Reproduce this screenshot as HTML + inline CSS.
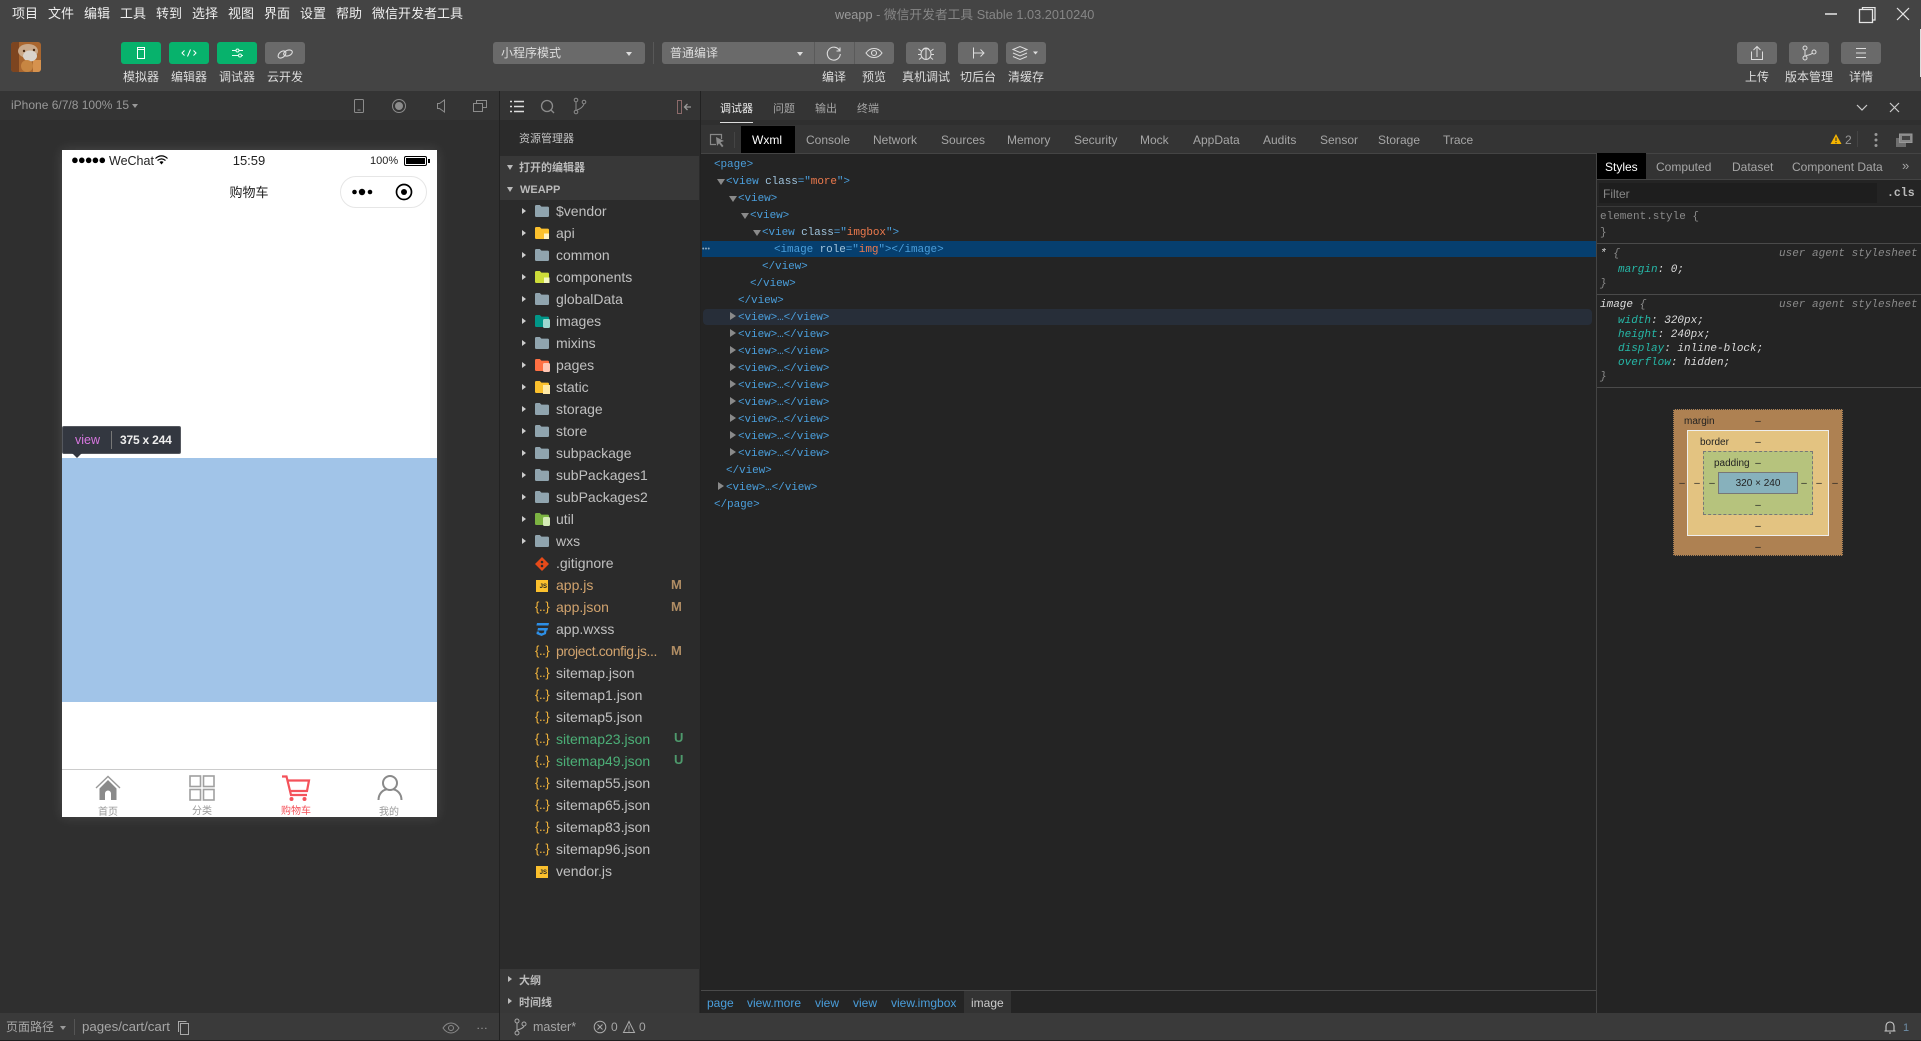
<!DOCTYPE html>
<html lang="zh">
<head>
<meta charset="utf-8">
<title>weapp</title>
<style>
*{box-sizing:border-box;margin:0;padding:0}
html,body{width:1921px;height:1041px;overflow:hidden;background:#2f2f2f}
body{position:relative;font-family:"Liberation Sans","Noto Sans CJK SC",sans-serif;font-size:12px;color:#ccc}
.b{position:absolute}
.t{position:absolute;white-space:nowrap;line-height:20px;height:20px}
.c{transform:translateX(-50%)}
.m{font-family:"Liberation Mono","Noto Sans CJK SC",monospace;font-size:11px}
.menu{font-size:13px;color:#eee;top:4px}
.lab{font-size:12px;color:#ddd;top:67px}
.btn{position:absolute;top:42px;height:22px;width:40px;border-radius:3px;background:#6a6a6a}
.g{background:#07b26c}
.btn svg{position:absolute;left:0;top:0}
.tab{font-size:12px;color:#a6a6a6;top:130px}
.rt{font-size:11px;color:#a6a6a6;top:99px}
.f{font-size:14px;color:#c0c0c0;left:556px;line-height:21px}
.ar{position:absolute;left:522px;width:0;height:0;margin-top:1px;border-left:4px solid #ccc;border-top:3px solid transparent;border-bottom:3px solid transparent}
.ic{position:absolute;left:535px}
.js{position:absolute;left:536px;width:12px;height:12px;background:#fbc02d;color:#222;font-size:6px;line-height:15px;text-align:right;font-weight:bold;padding-right:1px}
.jn{position:absolute;left:535px;font-size:13px;letter-spacing:-.4px;color:#f5b63c;line-height:20px;height:20px;white-space:nowrap}
.x{font-family:"Liberation Mono",monospace;font-size:11px;color:#4a9edb;line-height:19px;height:17px;position:absolute;white-space:nowrap;letter-spacing:-.08px}
.x i{font-style:normal;color:#9fc3dc}
.x u{text-decoration:none;color:#ee7a4d}
.tri{position:absolute;width:0;height:0;border-left:4px solid transparent;border-right:4px solid transparent;border-top:6px solid #8a8a8a}
.trr{position:absolute;width:0;height:0;border-left:6px solid #8a8a8a;border-top:4px solid transparent;border-bottom:4px solid transparent}
.s{font-family:"Liberation Mono",monospace;font-size:11px;line-height:17px;height:15px;position:absolute;white-space:nowrap;color:#8a8a8a}
.s b{font-weight:normal;font-style:italic;color:#26b7a7}
.s em{color:#ddd}
.d{font-size:10px;color:#222;line-height:14px;position:absolute;white-space:nowrap}
.crumb{font-size:12px;color:#4a9edb;top:993px}
</style>
</head>
<body>
<svg width="0" height="0" style="position:absolute"><defs>
<symbol id="fd" viewBox="0 0 14 12"><path d="M0 1.200C0 .5.5 0 1.200 0h3.600l1.600 1.600h6.400c.7 0 1.200.5 1.200 1.200v8c0 .7-.5 1.200-1.200 1.200H1.200C.5 12 0 11.500 0 10.800z" fill="#90a4ae"/></symbol>
</defs></svg>

<!-- top bar -->
<div class="b" style="left:0;top:0;width:1921px;height:91px;background:#444"></div>
<span class="t menu" style="left:12px">项目</span>
<span class="t menu" style="left:48px">文件</span>
<span class="t menu" style="left:84px">编辑</span>
<span class="t menu" style="left:120px">工具</span>
<span class="t menu" style="left:156px">转到</span>
<span class="t menu" style="left:192px">选择</span>
<span class="t menu" style="left:228px">视图</span>
<span class="t menu" style="left:264px">界面</span>
<span class="t menu" style="left:300px">设置</span>
<span class="t menu" style="left:336px">帮助</span>
<span class="t menu" style="left:372px">微信开发者工具</span>
<span class="t" style="left:835px;top:5px;font-size:12.750px;color:#868686"><span style="color:#9a9a9a">weapp</span> - 微信开发者工具 Stable 1.03.2010240</span>

<svg class="b" style="left:1825px;top:7px" width="90" height="17" fill="none" stroke="#e6e6e6">
<path d="M0 7h12" stroke-width="1.500"/>
<path d="M34.500 2.500h13v13h-13zM37.500 2.500V.5h12.500V13h-2.500" stroke-width="1.300"/>
<path d="M72 1l12 12M84 1L72 13" stroke-width="1.200"/>
</svg>
<div class="b" style="left:1920px;top:29px;width:1px;height:48px;background:#ddd"></div>

<!-- avatar -->
<svg class="b" style="left:11px;top:42px;border-radius:3px" width="30" height="30">
<rect width="30" height="30" fill="#a9662f"/>
<rect x="0" y="0" width="8" height="30" fill="#7d4520"/>
<rect x="22" y="18" width="8" height="12" fill="#d6924e"/>
<ellipse cx="17" cy="9" rx="10" ry="7" fill="#c9a98a"/>
<ellipse cx="19" cy="14" rx="7" ry="5.500" fill="#d9d3cc"/>
<ellipse cx="16" cy="24" rx="6" ry="6" fill="#c78642"/>
<circle cx="13" cy="9" r="1.200" fill="#4a2c17"/><circle cx="23" cy="8" r="1.200" fill="#4a2c17"/>
</svg>

<div class="btn g" style="left:121px"><svg width="40" height="22" fill="none" stroke="#fff"><rect x="16.500" y="5.500" width="7" height="11"/><path d="M17 7.500h6"/></svg></div>
<div class="btn g" style="left:169px"><svg width="40" height="22" fill="none" stroke="#fff"><path d="M15.500 8.500L13 11l2.500 2.500M24.500 8.500L27 11l-2.500 2.500M21.500 7.500l-3 7"/></svg></div>
<div class="btn g" style="left:217px"><svg width="40" height="22" fill="none" stroke="#e6fff3"><path d="M15 8.500h4M22 8.500h4M15 13.500h6M25 13.500h1"/><circle cx="20.500" cy="8.500" r="1.500"/><circle cx="23" cy="13.500" r="1.500"/></svg></div>
<div class="btn" style="left:265px"><svg width="40" height="22" fill="none" stroke="#ddd" stroke-width="1.100"><ellipse cx="17" cy="12.500" rx="4.500" ry="2.800" transform="rotate(-40 17 12.500)"/><ellipse cx="23" cy="11" rx="4.500" ry="2.800" transform="rotate(-20 23 11)"/></svg></div>
<span class="t lab c" style="left:141px">模拟器</span>
<span class="t lab c" style="left:189px">编辑器</span>
<span class="t lab c" style="left:237px">调试器</span>
<span class="t lab c" style="left:285px">云开发</span>

<div class="btn" style="left:493px;width:152px"><span class="t" style="left:8px;top:1px;color:#ddd;font-size:12px">小程序模式</span><div class="b" style="left:133px;top:10px;border-left:3px solid transparent;border-right:3px solid transparent;border-top:4px solid #ddd"></div></div>
<div class="b" style="left:653px;top:42px;width:1px;height:22px;background:#585858"></div>
<div class="btn" style="left:662px;width:232px"><span class="t" style="left:8px;top:1px;color:#ddd;font-size:12px">普通编译</span><div class="b" style="left:135px;top:10px;border-left:3px solid transparent;border-right:3px solid transparent;border-top:4px solid #ddd"></div>
<div class="b" style="left:152px;top:0;width:1px;height:22px;background:#5a5a5a"></div><div class="b" style="left:192px;top:0;width:1px;height:22px;background:#5a5a5a"></div>
<svg width="232" height="22" fill="none" stroke="#ddd" stroke-width="1.100"><path d="M177.500 8.500a6.500 6.500 0 1 0 .8 3.500M178 5.500v3.500h-3.500"/><path d="M204 11c2-3 4.500-4.500 8-4.500s6 1.500 8 4.500c-2 3-4.500 4.500-8 4.500s-6-1.500-8-4.500z"/><circle cx="212" cy="11" r="2.500"/></svg></div>
<span class="t lab c" style="left:834px">编译</span>
<span class="t lab c" style="left:874px">预览</span>
<div class="btn" style="left:906px"><svg width="40" height="22" fill="none" stroke="#ddd"><ellipse cx="20" cy="12" rx="5" ry="5.500"/><path d="M17 7.500c1-2 5-2 6 0M20 6.500v11M15 9l-2.500-2M25 9l2.500-2M14.500 12.500H12M25.500 12.500H28M15.500 15.500l-2.500 2M24.500 15.500l2.500 2"/></svg></div>
<span class="t lab c" style="left:926px">真机调试</span>
<div class="btn" style="left:958px"><svg width="40" height="22" fill="none" stroke="#ddd"><path d="M15.500 5.500v11M15.500 11h10M22.500 7.500l3.500 3.500-3.500 3.500"/></svg></div>
<span class="t lab c" style="left:978px">切后台</span>
<div class="btn" style="left:1006px"><svg width="40" height="22" fill="none" stroke="#ddd"><path d="M7 7.500l7-3 7 3-7 3zM7 11l7 3 7-3M7 14.500l7 3 7-3"/><path d="M27 9.500h5l-2.500 3z" fill="#ddd" stroke="none"/></svg></div>
<span class="t lab c" style="left:1026px">清缓存</span>

<div class="btn" style="left:1737px"><svg width="40" height="22" fill="none" stroke="#ddd"><path d="M14.500 9.500v8h11v-8M20 15V4.500M16.500 8l3.500-3.500L23.500 8"/></svg></div>
<div class="btn" style="left:1789px"><svg width="40" height="22" fill="none" stroke="#ddd"><circle cx="16" cy="6" r="2"/><circle cx="16" cy="16" r="2"/><circle cx="25" cy="10" r="2"/><path d="M16 8v6M17 13.500c3-.5 5.500-1 6.500-2.500"/></svg></div>
<div class="btn" style="left:1841px"><svg width="40" height="22" fill="none" stroke="#ddd"><path d="M15 6.500h10M15 11h10M15 15.500h10"/></svg></div>
<span class="t lab c" style="left:1757px">上传</span>
<span class="t lab c" style="left:1809px">版本管理</span>
<span class="t lab c" style="left:1861px">详情</span>

<!-- second rows -->
<div class="b" style="left:0;top:91px;width:1921px;height:29px;background:#343434"></div>
<div class="b" style="left:0;top:120px;width:500px;height:893px;background:#2f2f2f"></div>
<span class="t" style="left:11px;top:95px;color:#999;font-size:12px">iPhone 6/7/8 100% 15</span>
<div class="b" style="left:132px;top:104px;border-left:3px solid transparent;border-right:3px solid transparent;border-top:4px solid #999"></div>
<svg class="b" style="left:350px;top:96px" width="150" height="20" fill="none" stroke="#8c8c8c">
<rect x="4.500" y="3.500" width="9" height="13" rx="1"/><path d="M7.500 14h3"/>
<circle cx="49" cy="10" r="6.500"/><circle cx="49" cy="10" r="3.500" fill="#8c8c8c"/>
<path d="M89.500 7.500h-2v5h2l5 3.500V4z"/>
<rect x="123.500" y="7.500" width="9" height="8"/><path d="M126.500 7.500v-3h10v7h-4"/>
</svg>

<!-- phone -->
<div class="b" style="left:62px;top:150px;width:375px;height:667px;background:#fff;box-shadow:0 0 12px rgba(255,255,255,.13);overflow:hidden"></div>
<span class="t" style="left:71px;top:150px;color:#000;font-size:13px;letter-spacing:-1px">●●●●●</span>
<span class="t" style="left:109px;top:151px;color:#222;font-size:12.500px">WeChat</span>
<svg class="b" style="left:155px;top:155px" width="13" height="10" fill="none" stroke="#000" stroke-width="1.200"><path d="M.5 3.500c3.500-3.500 8.500-3.500 12 0M2.500 5.500c2.500-2 5.500-2 8 0"/><path d="M4.500 7L6.500 9.500 8.500 7c-1-1-3-1-4 0z" fill="#000" stroke="none"/></svg>
<span class="t c" style="left:249px;top:151px;color:#222;font-size:13px">15:59</span>
<span class="t" style="left:370px;top:151px;color:#222;font-size:11px">100%</span>
<div class="b" style="left:404px;top:156px;width:23px;height:10px;border:1px solid #000;border-radius:2px;padding:1px"><div style="width:100%;height:100%;background:#000"></div></div>
<div class="b" style="left:428px;top:159px;width:1.500px;height:4px;background:#000"></div>
<span class="t c" style="left:249px;top:183px;color:#222;font-size:13px">购物车</span>
<div class="b" style="left:340px;top:176px;width:87px;height:32px;border:1px solid #e6e6e6;border-radius:16px;background:#fff"></div>
<svg class="b" style="left:350px;top:182px" width="70" height="20"><circle cx="4.500" cy="10" r="2.300"/><circle cx="12" cy="10" r="3.200"/><circle cx="20" cy="10" r="2.300"/><circle cx="54" cy="10" r="7.500" fill="none" stroke="#000" stroke-width="1.700"/><circle cx="54" cy="10" r="3"/></svg>
<div class="b" style="left:62px;top:458px;width:375px;height:244px;background:#a1c4e8"></div>
<div class="b" style="left:62px;top:426px;width:119px;height:28px;background:#333740;border:1px solid #55585f;border-radius:2px"></div>
<div class="b" style="left:72px;top:453px;border-left:5px solid transparent;border-right:5px solid transparent;border-top:5px solid #333740"></div>
<span class="t" style="left:75px;top:430px;color:#d877e0;font-size:12.500px">view</span>
<div class="b" style="left:111px;top:431px;width:1px;height:18px;background:#777"></div>
<span class="t" style="left:120px;top:430px;color:#eee;font-size:12px;font-weight:bold;letter-spacing:-.2px">375 x 244</span>
<div class="b" style="left:62px;top:769px;width:375px;height:1px;background:#ccc"></div>
<svg class="b" style="left:95px;top:774px" width="26" height="27"><path d="M1 14L13 2.500 25 14" fill="none" stroke="#999" stroke-width="1.400"/><path d="M4.500 14.500L13 6l8.500 8.500V26H16v-6.500a3 3 0 0 0-6 0V26H4.500z" fill="#8a8a8a"/></svg>
<svg class="b" style="left:189px;top:775px" width="27" height="27" fill="none" stroke="#a0a0a0" stroke-width="1.600"><rect x="1" y="1" width="10.500" height="10.500"/><rect x="14.500" y="1" width="10.500" height="10.500"/><rect x="1" y="14.500" width="10.500" height="10.500"/><rect x="14.500" y="14.500" width="10.500" height="10.500"/></svg>
<svg class="b" style="left:281px;top:775px" width="30" height="27" fill="none" stroke="#f4525a" stroke-width="2.200"><path d="M1 1.500h4.500L10 20h16"/><path d="M7 5.500h21l-2 10.500H9.500"/><circle cx="10.500" cy="24" r="2" fill="#f4525a" stroke="none"/><circle cx="23.500" cy="24" r="2" fill="#f4525a" stroke="none"/></svg>
<svg class="b" style="left:377px;top:774px" width="26" height="28" fill="none" stroke="#8a8a8a" stroke-width="2"><circle cx="13" cy="9" r="7"/><path d="M1.500 26c0-6 4-10 8-10.500M24.500 26c0-6-4-10-8-10.500"/></svg>
<span class="t c" style="left:108px;top:803px;color:#999;font-size:10px">首页</span>
<span class="t c" style="left:202px;top:802px;color:#999;font-size:10px">分类</span>
<span class="t c" style="left:296px;top:802px;color:#f4525a;font-size:10px">购物车</span>
<span class="t c" style="left:389px;top:803px;color:#999;font-size:10px">我的</span>

<!-- middle panel -->
<div class="b" style="left:499px;top:91px;width:1px;height:949px;background:#222"></div>
<div class="b" style="left:500px;top:120px;width:200px;height:893px;background:#2b2b2b"></div>
<svg class="b" style="left:500px;top:96px" width="200" height="22" fill="none">
<path d="M10 5.500h2M14 5.500h10M10 10.500h2M14 10.500h10M10 15.500h2M14 15.500h10" stroke="#ddd" stroke-width="1.500"/>
<circle cx="47" cy="10" r="5.500" stroke="#8c8c8c" stroke-width="1.300"/><path d="M51 14l3 3" stroke="#8c8c8c" stroke-width="1.300"/>
<circle cx="76" cy="16" r="1.800" stroke="#8c8c8c"/><circle cx="76" cy="4" r="1.800" stroke="#8c8c8c"/><circle cx="84" cy="6" r="1.800" stroke="#8c8c8c"/><path d="M76 6v8M77 14c3-1 6-3 7-6" stroke="#8c8c8c"/>
<rect x="177.500" y="4.500" width="4" height="13" stroke="#8c6a6a"/><path d="M191 11h-6M187.500 8l-3 3 3 3" stroke="#999" stroke-width="1.300"/>
</svg>
<span class="t" style="left:519px;top:129px;color:#c4c4c4;font-size:11px">资源管理器</span>
<div class="b" style="left:500px;top:156px;width:199px;height:44px;background:#383838"></div>
<div class="b" style="left:507px;top:165px;border-left:3.500px solid transparent;border-right:3.500px solid transparent;border-top:5px solid #bbb"></div>
<span class="t" style="left:519px;top:158px;color:#bbb;font-size:11px;font-weight:bold">打开的编辑器</span>
<div class="b" style="left:507px;top:187px;border-left:3.500px solid transparent;border-right:3.500px solid transparent;border-top:5px solid #bbb"></div>
<span class="t" style="left:520px;top:180px;color:#bbb;font-size:11px;font-weight:bold">WEAPP</span>

<!-- tree -->
<div class="ar" style="top:207px"></div><svg class="ic" style="top:205px" width="14" height="12"><use href="#fd"/></svg><span class="t f" style="top:201px">$vendor</span>
<div class="ar" style="top:229px"></div><svg class="ic" style="top:227px" width="15" height="13"><path d="M0 1.200C0 .5.5 0 1.200 0h3.600l1.600 1.600h6.400c.7 0 1.200.5 1.200 1.200v8c0 .7-.5 1.200-1.200 1.200H1.200C.5 12 0 11.500 0 10.800z" fill="#fbc02d"/><path d="M9 6.500h5v5.500H9z" fill="#fff2c4"/></svg><span class="t f" style="top:223px">api</span>
<div class="ar" style="top:251px"></div><svg class="ic" style="top:249px" width="14" height="12"><use href="#fd"/></svg><span class="t f" style="top:245px">common</span>
<div class="ar" style="top:273px"></div><svg class="ic" style="top:271px" width="15" height="13"><path d="M0 1.200C0 .5.5 0 1.200 0h3.600l1.600 1.600h6.400c.7 0 1.200.5 1.200 1.200v8c0 .7-.5 1.200-1.200 1.200H1.200C.5 12 0 11.500 0 10.800z" fill="#cddc39"/><path d="M9 6.500h5.500V12H9z" fill="#f4f8c0"/></svg><span class="t f" style="top:267px">components</span>
<div class="ar" style="top:295px"></div><svg class="ic" style="top:293px" width="14" height="12"><use href="#fd"/></svg><span class="t f" style="top:289px">globalData</span>
<div class="ar" style="top:317px"></div><svg class="ic" style="top:315px" width="15" height="13"><path d="M0 1.200C0 .5.5 0 1.200 0h3.600l1.600 1.600h6.400c.7 0 1.200.5 1.200 1.200v8c0 .7-.5 1.200-1.200 1.200H1.200C.5 12 0 11.500 0 10.800z" fill="#009688"/><rect x="8" y="4" width="7" height="9" rx="1.500" fill="#9fd8cf"/></svg><span class="t f" style="top:311px">images</span>
<div class="ar" style="top:339px"></div><svg class="ic" style="top:337px" width="14" height="12"><use href="#fd"/></svg><span class="t f" style="top:333px">mixins</span>
<div class="ar" style="top:361px"></div><svg class="ic" style="top:359px" width="15" height="13"><path d="M0 1.200C0 .5.5 0 1.200 0h3.600l1.600 1.600h6.400c.7 0 1.200.5 1.200 1.200v8c0 .7-.5 1.200-1.200 1.200H1.200C.5 12 0 11.500 0 10.800z" fill="#ff7043"/><rect x="8" y="4" width="7" height="9" rx="1.500" fill="#ffc7b5"/></svg><span class="t f" style="top:355px">pages</span>
<div class="ar" style="top:383px"></div><svg class="ic" style="top:381px" width="15" height="13"><path d="M0 1.200C0 .5.5 0 1.200 0h3.600l1.600 1.600h6.400c.7 0 1.200.5 1.200 1.200v8c0 .7-.5 1.200-1.200 1.200H1.200C.5 12 0 11.500 0 10.800z" fill="#fbc02d"/><rect x="8" y="4" width="7" height="9" fill="#ffe9a6"/></svg><span class="t f" style="top:377px">static</span>
<div class="ar" style="top:405px"></div><svg class="ic" style="top:403px" width="14" height="12"><use href="#fd"/></svg><span class="t f" style="top:399px">storage</span>
<div class="ar" style="top:427px"></div><svg class="ic" style="top:425px" width="14" height="12"><use href="#fd"/></svg><span class="t f" style="top:421px">store</span>
<div class="ar" style="top:449px"></div><svg class="ic" style="top:447px" width="14" height="12"><use href="#fd"/></svg><span class="t f" style="top:443px">subpackage</span>
<div class="ar" style="top:471px"></div><svg class="ic" style="top:469px" width="14" height="12"><use href="#fd"/></svg><span class="t f" style="top:465px">subPackages1</span>
<div class="ar" style="top:493px"></div><svg class="ic" style="top:491px" width="14" height="12"><use href="#fd"/></svg><span class="t f" style="top:487px">subPackages2</span>
<div class="ar" style="top:515px"></div><svg class="ic" style="top:513px" width="15" height="13"><path d="M0 1.200C0 .5.5 0 1.200 0h3.600l1.600 1.600h6.400c.7 0 1.200.5 1.200 1.200v8c0 .7-.5 1.200-1.200 1.200H1.200C.5 12 0 11.500 0 10.800z" fill="#7cb342"/><rect x="8" y="4" width="7" height="9" rx="1.500" fill="#d5ecb8"/></svg><span class="t f" style="top:509px">util</span>
<div class="ar" style="top:537px"></div><svg class="ic" style="top:535px" width="14" height="12"><use href="#fd"/></svg><span class="t f" style="top:531px">wxs</span>
<svg class="ic" style="top:557px" width="14" height="14"><path d="M7 0l7 7-7 7-7-7z" fill="#e64a19"/><circle cx="7" cy="5" r="1.300" fill="#2b2b2b"/><circle cx="7" cy="9" r="1.300" fill="#2b2b2b"/></svg><span class="t f" style="top:553px">.gitignore</span>
<div class="js" style="top:580px">JS</div><span class="t f" style="top:575px;color:#d1a36e">app.js</span><span class="t" style="left:671px;top:575px;font-size:13px;font-weight:bold;color:#b08d64">M</span>
<span class="jn" style="top:597px">{..}</span><span class="t f" style="top:597px;color:#d1a36e">app.json</span><span class="t" style="left:671px;top:597px;font-size:13px;font-weight:bold;color:#b08d64">M</span>
<svg class="ic" style="top:623px" width="14" height="14" fill="#2d8fe6"><path d="M2 0h12l-.6 2.500H1.400zM3 5h10l-.6 2.500H2.400zM11.500 7.500L11 11l-4.500 2-5-2 .3-2.500h2.300l-.1 1 2.500.9 2.500-.9.3-2z"/></svg><span class="t f" style="top:619px">app.wxss</span>
<span class="jn" style="top:641px">{..}</span><span class="t f" style="top:641px;color:#d1a36e;letter-spacing:-.4px">project.config.js...</span><span class="t" style="left:671px;top:641px;font-size:13px;font-weight:bold;color:#b08d64">M</span>
<span class="jn" style="top:663px">{..}</span><span class="t f" style="top:663px">sitemap.json</span>
<span class="jn" style="top:685px">{..}</span><span class="t f" style="top:685px">sitemap1.json</span>
<span class="jn" style="top:707px">{..}</span><span class="t f" style="top:707px">sitemap5.json</span>
<span class="jn" style="top:729px">{..}</span><span class="t f" style="top:729px;color:#4caf77">sitemap23.json</span><span class="t" style="left:674px;top:728px;font-size:13px;font-weight:bold;color:#4e9a6c">U</span>
<span class="jn" style="top:751px">{..}</span><span class="t f" style="top:751px;color:#4caf77">sitemap49.json</span><span class="t" style="left:674px;top:750px;font-size:13px;font-weight:bold;color:#4e9a6c">U</span>
<span class="jn" style="top:773px">{..}</span><span class="t f" style="top:773px">sitemap55.json</span>
<span class="jn" style="top:795px">{..}</span><span class="t f" style="top:795px">sitemap65.json</span>
<span class="jn" style="top:817px">{..}</span><span class="t f" style="top:817px">sitemap83.json</span>
<span class="jn" style="top:839px">{..}</span><span class="t f" style="top:839px">sitemap96.json</span>
<div class="js" style="top:866px">JS</div><span class="t f" style="top:861px">vendor.js</span>

<div class="b" style="left:500px;top:969px;width:199px;height:44px;background:#383838"></div>
<div class="trr" style="left:508px;top:976px;border-left:4px solid #bbb;border-top:3.500px solid transparent;border-bottom:3.500px solid transparent"></div>
<span class="t" style="left:519px;top:971px;color:#bbb;font-size:11px;font-weight:bold">大纲</span>
<div class="trr" style="left:508px;top:998px;border-left:4px solid #bbb;border-top:3.500px solid transparent;border-bottom:3.500px solid transparent"></div>
<span class="t" style="left:519px;top:993px;color:#bbb;font-size:11px;font-weight:bold">时间线</span>

<!-- devtools -->
<div class="b" style="left:700px;top:91px;width:1px;height:922px;background:#222"></div>
<div class="b" style="left:701px;top:125px;width:1220px;height:28px;background:#343434"></div>
<div class="b" style="left:701px;top:153px;width:1220px;height:860px;background:#242424;border-top:1px solid #444"></div>
<span class="t rt" style="left:720px;color:#eee">调试器</span>
<div class="b" style="left:720px;top:122px;width:33px;height:1px;background:#ddd"></div>
<span class="t rt" style="left:773px">问题</span>
<span class="t rt" style="left:815px">输出</span>
<span class="t rt" style="left:857px">终端</span>
<svg class="b" style="left:1855px;top:101px" width="50" height="14" fill="none" stroke="#ccc" stroke-width="1.200"><path d="M2 4l5 5 5-5"/><path d="M35 2l9 9M44 2l-9 9"/></svg>

<svg class="b" style="left:708px;top:131px" width="18" height="18" fill="none"><path d="M8 13.500H2.500v-10h11V8" stroke="#888" stroke-width="1.200"/><path d="M8 6l8 4-3.500 1.200 3 3.800-1.500 1.200-3-3.800L9 15z" fill="#8a8a8a"/></svg>
<div class="b" style="left:734px;top:132px;width:1px;height:16px;background:#444"></div>
<div class="b" style="left:741px;top:126px;width:54px;height:27px;background:#000"></div>
<span class="t tab" style="left:752px;color:#fff">Wxml</span>
<span class="t tab" style="left:806px">Console</span>
<span class="t tab" style="left:873px">Network</span>
<span class="t tab" style="left:941px">Sources</span>
<span class="t tab" style="left:1007px">Memory</span>
<span class="t tab" style="left:1074px">Security</span>
<span class="t tab" style="left:1140px">Mock</span>
<span class="t tab" style="left:1193px">AppData</span>
<span class="t tab" style="left:1263px">Audits</span>
<span class="t tab" style="left:1320px">Sensor</span>
<span class="t tab" style="left:1378px">Storage</span>
<span class="t tab" style="left:1443px">Trace</span>
<svg class="b" style="left:1830px;top:133px" width="12" height="12"><path d="M6 1l5.500 10H.5z" fill="#f5b400"/><path d="M6 4.500v3.500M6 9v1.200" stroke="#333" stroke-width="1.100"/></svg>
<span class="t" style="left:1845px;top:130px;color:#999;font-size:12px">2</span>
<div class="b" style="left:1857px;top:131px;width:1px;height:16px;background:#444"></div>
<svg class="b" style="left:1870px;top:132px" width="50" height="16"><circle cx="6" cy="2.500" r="1.500" fill="#999"/><circle cx="6" cy="8" r="1.500" fill="#999"/><circle cx="6" cy="13.500" r="1.500" fill="#999"/><path d="M26 6h10v9H26z" fill="#6e6e6e"/><path d="M29.500 2h12.500v8.500H29.500z" fill="#888" stroke="#999"/><path d="M32 4h8v4h-8z" fill="#444"/></svg>

<!-- wxml -->
<div class="b" style="left:702px;top:241px;width:894px;height:16px;background:#063f6f"></div>
<span class="t" style="left:702px;top:240px;color:#8fa9bd;font-size:7px;letter-spacing:.3px">•••</span>
<div class="b" style="left:703px;top:309px;width:889px;height:16px;background:#272e39;border-radius:4px"></div>
<div class="x" style="left:714px;top:156px">&lt;page&gt;</div>
<div class="tri" style="left:717px;top:179px"></div>
<div class="x" style="left:726px;top:173px">&lt;view <i>class</i>=&quot;<u>more</u>&quot;&gt;</div>
<div class="tri" style="left:729px;top:196px"></div>
<div class="x" style="left:738px;top:190px">&lt;view&gt;</div>
<div class="tri" style="left:741px;top:213px"></div>
<div class="x" style="left:750px;top:207px">&lt;view&gt;</div>
<div class="tri" style="left:753px;top:230px"></div>
<div class="x" style="left:762px;top:224px">&lt;view <i>class</i>=&quot;<u>imgbox</u>&quot;&gt;</div>
<div class="x" style="left:774px;top:241px">&lt;image <i>role</i>=&quot;<u>img</u>&quot;&gt;&lt;/image&gt;</div>
<div class="x" style="left:762px;top:258px">&lt;/view&gt;</div>
<div class="x" style="left:750px;top:275px">&lt;/view&gt;</div>
<div class="x" style="left:738px;top:292px">&lt;/view&gt;</div>
<div class="trr" style="left:730px;top:312px"></div><div class="x" style="left:738px;top:309px">&lt;view&gt;…&lt;/view&gt;</div>
<div class="trr" style="left:730px;top:329px"></div><div class="x" style="left:738px;top:326px">&lt;view&gt;…&lt;/view&gt;</div>
<div class="trr" style="left:730px;top:346px"></div><div class="x" style="left:738px;top:343px">&lt;view&gt;…&lt;/view&gt;</div>
<div class="trr" style="left:730px;top:363px"></div><div class="x" style="left:738px;top:360px">&lt;view&gt;…&lt;/view&gt;</div>
<div class="trr" style="left:730px;top:380px"></div><div class="x" style="left:738px;top:377px">&lt;view&gt;…&lt;/view&gt;</div>
<div class="trr" style="left:730px;top:397px"></div><div class="x" style="left:738px;top:394px">&lt;view&gt;…&lt;/view&gt;</div>
<div class="trr" style="left:730px;top:414px"></div><div class="x" style="left:738px;top:411px">&lt;view&gt;…&lt;/view&gt;</div>
<div class="trr" style="left:730px;top:431px"></div><div class="x" style="left:738px;top:428px">&lt;view&gt;…&lt;/view&gt;</div>
<div class="trr" style="left:730px;top:448px"></div><div class="x" style="left:738px;top:445px">&lt;view&gt;…&lt;/view&gt;</div>
<div class="x" style="left:726px;top:462px">&lt;/view&gt;</div>
<div class="trr" style="left:718px;top:482px"></div><div class="x" style="left:726px;top:479px">&lt;view&gt;…&lt;/view&gt;</div>
<div class="x" style="left:714px;top:496px">&lt;/page&gt;</div>

<!-- styles -->
<div class="b" style="left:1596px;top:153px;width:1px;height:860px;background:#444"></div>
<div class="b" style="left:1597px;top:154px;width:324px;height:26px;background:#333"></div>
<div class="b" style="left:1597px;top:179px;width:324px;height:1px;background:#444"></div>
<div class="b" style="left:1597px;top:153px;width:49px;height:26px;background:#000"></div>
<span class="t" style="left:1605px;top:157px;color:#fff;font-size:12px">Styles</span>
<span class="t" style="left:1656px;top:157px;color:#a6a6a6;font-size:12px">Computed</span>
<span class="t" style="left:1732px;top:157px;color:#a6a6a6;font-size:12px">Dataset</span>
<span class="t" style="left:1792px;top:157px;color:#a6a6a6;font-size:12px">Component Data</span>
<span class="t" style="left:1902px;top:156px;color:#a6a6a6;font-size:13px">»</span>
<div class="b" style="left:1599px;top:183px;width:278px;height:20px;background:#1e1e1e"></div>
<span class="t" style="left:1603px;top:184px;color:#888;font-size:12px">Filter</span>
<span class="t m" style="left:1887px;top:184px;color:#bbb;font-weight:bold;font-size:11.500px">.cls</span>
<div class="b" style="left:1597px;top:206px;width:324px;height:1px;background:#3a3a3a"></div>
<div class="s" style="left:1600px;top:209px">element.style {</div>
<div class="s" style="left:1600px;top:225px">}</div>
<div class="b" style="left:1597px;top:243px;width:324px;height:1px;background:#4a4a4a"></div>
<div class="s" style="left:1600px;top:246px"><em>*</em> <span style="font-style:italic">{</span></div>
<div class="s" style="left:1779px;top:246px;font-style:italic">user agent stylesheet</div>
<div class="s" style="left:1618px;top:262px"><b>margin</b><em style="font-style:italic">: 0;</em></div>
<div class="s" style="left:1600px;top:276px;font-style:italic">}</div>
<div class="b" style="left:1597px;top:294px;width:324px;height:1px;background:#4a4a4a"></div>
<div class="s" style="left:1600px;top:297px"><em style="font-style:italic">image</em> <span style="font-style:italic">{</span></div>
<div class="s" style="left:1779px;top:297px;font-style:italic">user agent stylesheet</div>
<div class="s" style="left:1618px;top:313px"><b>width</b><em style="font-style:italic">: 320px;</em></div>
<div class="s" style="left:1618px;top:327px"><b>height</b><em style="font-style:italic">: 240px;</em></div>
<div class="s" style="left:1618px;top:341px"><b>display</b><em style="font-style:italic">: inline-block;</em></div>
<div class="s" style="left:1618px;top:355px"><b>overflow</b><em style="font-style:italic">: hidden;</em></div>
<div class="s" style="left:1600px;top:369px;font-style:italic">}</div>
<div class="b" style="left:1597px;top:387px;width:324px;height:1px;background:#4a4a4a"></div>

<!-- box model -->
<div class="b" style="left:1673px;top:409px;width:170px;height:147px;background:#ae8152;border:1px dotted #333"></div>
<div class="b" style="left:1687px;top:430px;width:142px;height:106px;background:#e3c381;border:1px solid #eee"></div>
<div class="b" style="left:1703px;top:451px;width:110px;height:64px;background:#b6c37d;border:1px dashed #777"></div>
<div class="b" style="left:1718px;top:472px;width:80px;height:22px;background:#87b1bc;border:1px solid #777"></div>
<span class="d" style="left:1684px;top:415px">margin</span><span class="d c" style="left:1758px;top:415px">–</span>
<span class="d" style="left:1700px;top:436px">border</span><span class="d c" style="left:1758px;top:436px">–</span>
<span class="d" style="left:1714px;top:457px">padding</span><span class="d c" style="left:1758px;top:457px">–</span>
<span class="d c" style="left:1758px;top:477px">320 × 240</span>
<span class="d c" style="left:1758px;top:499px">–</span><span class="d c" style="left:1758px;top:520px">–</span><span class="d c" style="left:1758px;top:541px">–</span>
<span class="d c" style="left:1682px;top:477px">–</span><span class="d c" style="left:1697px;top:477px">–</span><span class="d c" style="left:1712px;top:477px">–</span>
<span class="d c" style="left:1804px;top:477px">–</span><span class="d c" style="left:1819px;top:477px">–</span><span class="d c" style="left:1835px;top:477px">–</span>

<!-- breadcrumb -->
<div class="b" style="left:701px;top:990px;width:895px;height:1px;background:#4a4a4a"></div>
<div class="b" style="left:964px;top:991px;width:47px;height:22px;background:#333"></div>
<span class="t crumb" style="left:707px">page</span>
<span class="t crumb" style="left:747px">view.more</span>
<span class="t crumb" style="left:815px">view</span>
<span class="t crumb" style="left:853px">view</span>
<span class="t crumb" style="left:891px">view.imgbox</span>
<span class="t crumb" style="left:971px;color:#ccc">image</span>

<!-- status -->
<div class="b" style="left:0;top:1013px;width:1921px;height:27px;background:#3a3a3a"></div>
<div class="b" style="left:0;top:1040px;width:1921px;height:1px;background:#1f1f1f"></div>
<div class="b" style="left:499px;top:1013px;width:1px;height:27px;background:#222"></div>
<span class="t" style="left:6px;top:1017px;color:#a6a6a6;font-size:12px">页面路径</span>
<div class="b" style="left:60px;top:1026px;border-left:3px solid transparent;border-right:3px solid transparent;border-top:4px solid #999"></div>
<div class="b" style="left:74px;top:1019px;width:1px;height:16px;background:#555"></div>
<span class="t" style="left:82px;top:1017px;color:#a6a6a6;font-size:13.300px">pages/cart/cart</span>
<svg class="b" style="left:176px;top:1020px" width="14" height="15" fill="none" stroke="#aaa"><path d="M4.500 3.500h8v11h-8z"/><path d="M2.500 12V1.500h8"/></svg>
<svg class="b" style="left:442px;top:1022px" width="18" height="12" fill="none" stroke="#8a8a8a"><path d="M1 6c2-3 4.500-5 8-5s6 2 8 5c-2 3-4.500 5-8 5s-6-2-8-5z"/><circle cx="9" cy="6" r="2.500"/></svg>
<span class="t" style="left:476px;top:1015px;color:#999;font-size:12px;letter-spacing:1px">…</span>
<svg class="b" style="left:513px;top:1018px" width="14" height="18" fill="none" stroke="#aaa"><circle cx="4" cy="3" r="2"/><circle cx="4" cy="15" r="2"/><circle cx="11" cy="6" r="2"/><path d="M4 5v8M4.500 12c3-1 6-2 6.500-4"/></svg>
<span class="t" style="left:533px;top:1017px;color:#a6a6a6;font-size:12.500px">master*</span>
<svg class="b" style="left:593px;top:1020px" width="14" height="14" fill="none" stroke="#aaa"><circle cx="7" cy="7" r="5.800"/><path d="M4.500 4.500l5 5M9.500 4.500l-5 5"/></svg>
<span class="t" style="left:611px;top:1017px;color:#a6a6a6;font-size:12px">0</span>
<svg class="b" style="left:622px;top:1020px" width="14" height="14" fill="none" stroke="#aaa"><path d="M7 1.500l5.500 11h-11zM7 5.500v4M7 10.500v1"/></svg>
<span class="t" style="left:639px;top:1017px;color:#a6a6a6;font-size:12px">0</span>
<svg class="b" style="left:1884px;top:1020px" width="12" height="14" fill="none" stroke="#ccc" stroke-width="1.100"><path d="M2 10.500V6a4 4 0 0 1 8 0v4.500M.5 11h11M5 13h2"/></svg>
<span class="t" style="left:1903px;top:1018px;color:#6e8ea8;font-size:11px">1</span>
</body>
</html>
